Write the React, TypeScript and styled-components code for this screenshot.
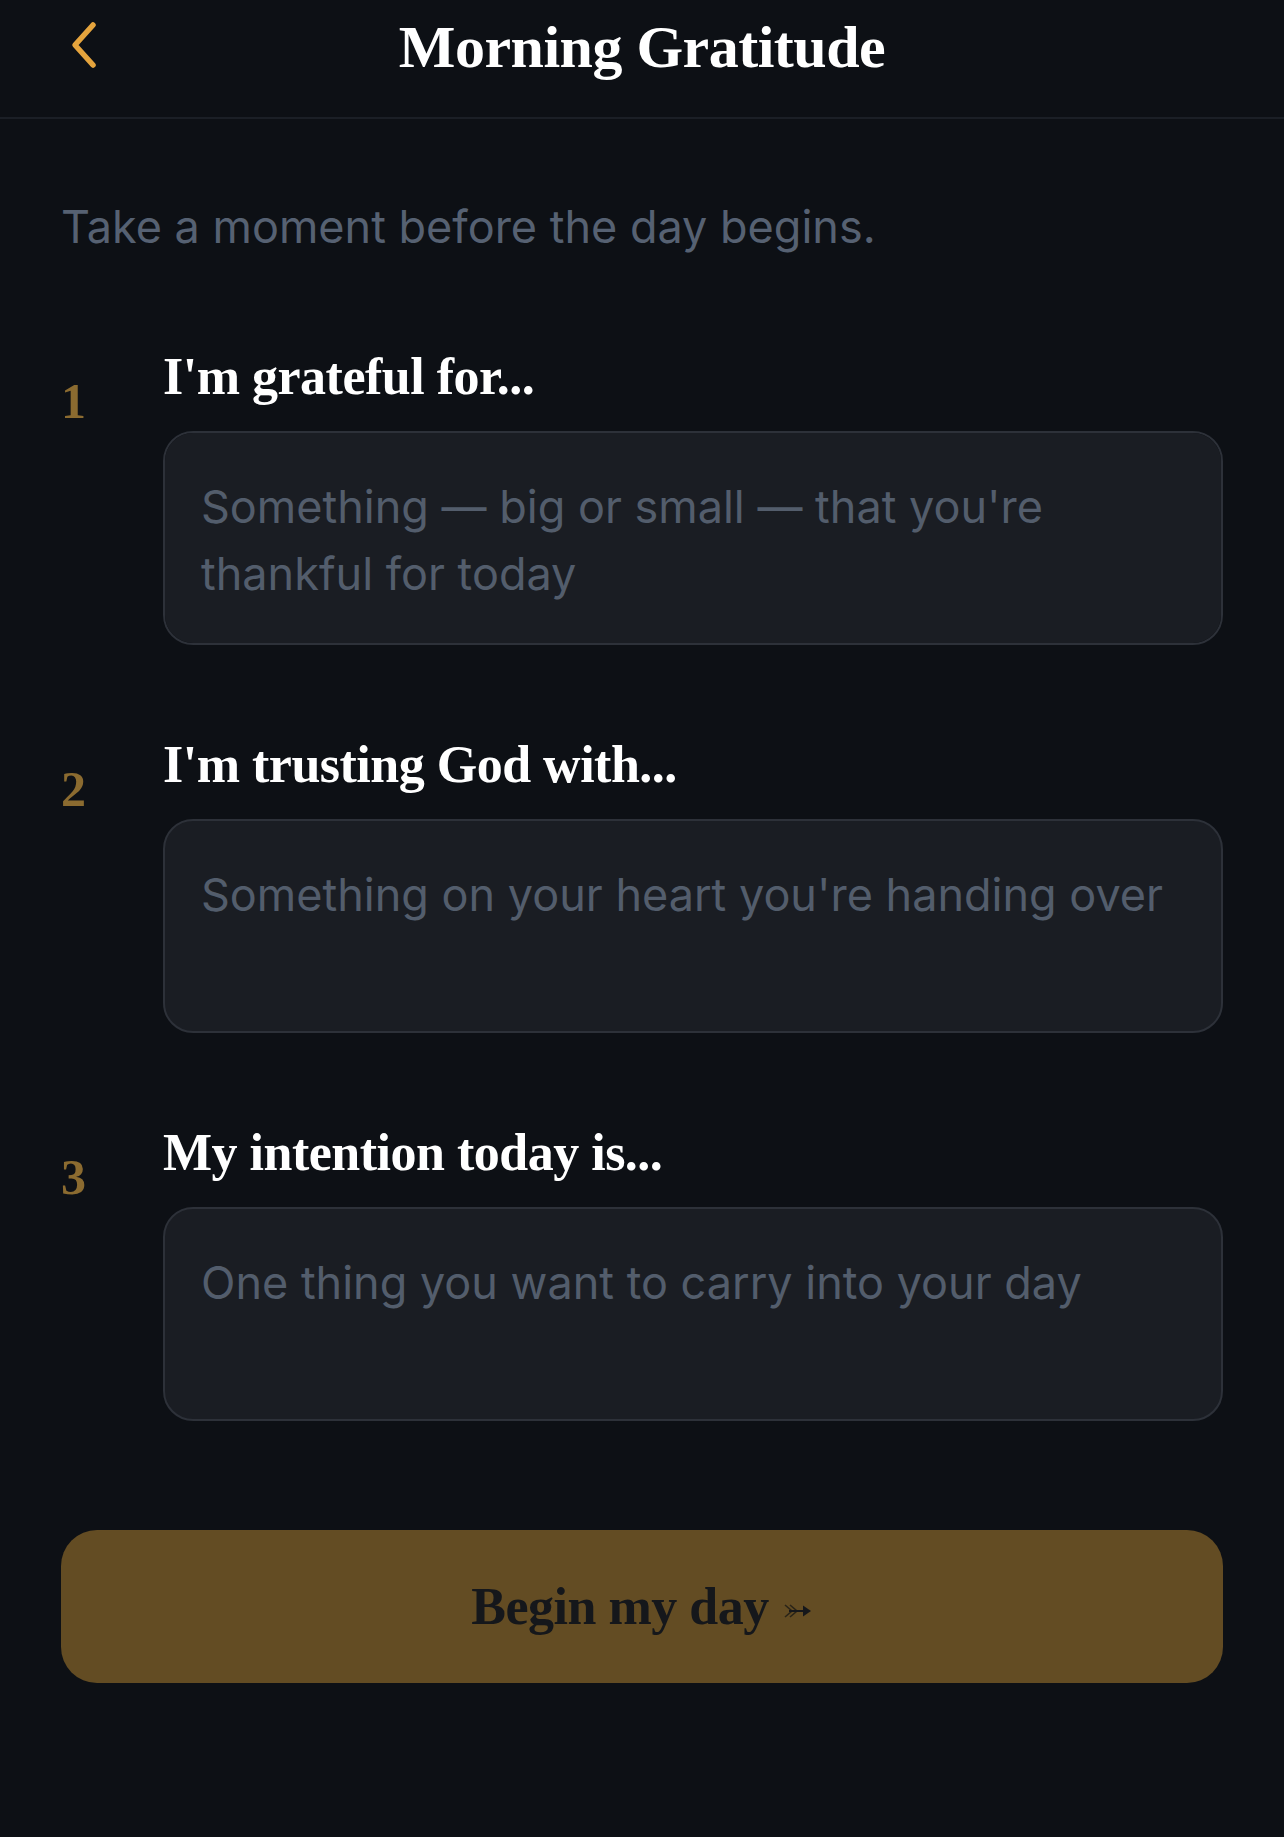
import * as React from "react";
import styled, { createGlobalStyle } from "styled-components";

const GlobalStyle = createGlobalStyle`
  html, body {
    margin: 0;
    padding: 0;
    background: #0d1015;
  }
  body {
    font-family: Inter, "Liberation Sans", sans-serif;
    -webkit-font-smoothing: antialiased;
  }
`;

const serif = `"Liberation Serif", "DejaVu Serif", serif`;

const Screen = styled.div`
  min-height: 1837px;
  background: #0d1015;
  color: #fff;
`;

const Header = styled.header`
  display: grid;
  grid-template-columns: 1fr auto 1fr;
  align-items: start;
  height: 119px;
  padding: 13px 68px 0;
  box-sizing: border-box;
  border-bottom: 2px solid #1b1f26;
`;

const BackButton = styled.button`
  justify-self: start;
  display: flex;
  align-items: center;
  background: none;
  border: 0;
  padding: 7px 0 0;
  cursor: pointer;
`;

const Title = styled.h1`
  margin: 0;
  font-family: ${serif};
  font-weight: 700;
  font-size: 60px;
  line-height: 68px;
  letter-spacing: -0.5px;
  color: #ffffff;
`;

const Content = styled.main`
  padding: 82px 61px 0;
`;

const Intro = styled.p`
  margin: 0 0 94px;
  font-size: 45px;
  line-height: 52px;
  color: #566172;
`;

const List = styled.div`
  display: flex;
  flex-direction: column;
  gap: 90px;
`;

const Item = styled.section`
  display: grid;
  grid-template-columns: 102px 1fr;
`;

const Num = styled.span`
  font-family: ${serif};
  font-weight: 700;
  font-size: 50px;
  line-height: 48px;
  margin-top: 30px;
  color: #8b6b30;
`;

const Body = styled.div`
  display: flex;
  flex-direction: column;
  gap: 24px;
`;

const Label = styled.label`
  font-family: ${serif};
  font-weight: 700;
  font-size: 52px;
  line-height: 60px;
  letter-spacing: -0.5px;
  color: #ffffff;
`;

const Field = styled.textarea`
  display: block;
  width: 100%;
  height: 214px;
  box-sizing: border-box;
  padding: 40px 36px 40px;
  resize: none;
  border: 2px solid #2d3139;
  border-radius: 30px;
  background: #1a1d23;
  color: #e6e8ec;
  font-family: Inter, "Liberation Sans", sans-serif;
  font-size: 45px;
  line-height: 67px;
  outline: none;
  &::placeholder {
    color: #535d6c;
  }
`;

const BeginButton = styled.button`
  display: flex;
  align-items: center;
  justify-content: center;
  gap: 14px;
  width: 100%;
  height: 153px;
  margin-top: 109px;
  border: 0;
  border-radius: 36px;
  background: #634c23;
  color: #15171b;
  font-family: ${serif};
  font-weight: 700;
  font-size: 52px;
  letter-spacing: -0.5px;
  cursor: pointer;
`;

const ArrowIcon = styled.svg`
  margin-top: 8px;
`;

const ChevronLeft = () => (
  <svg width="30" height="50" viewBox="0 0 30 50" fill="none">
    <path
      d="M25 5 L7 25 L25 45"
      stroke="#e5a43d"
      strokeWidth="5.5"
      strokeLinecap="round"
      strokeLinejoin="round"
    />
  </svg>
);

const FeatherArrow = () => (
  <ArrowIcon width="30" height="18" viewBox="0 0 30 18" fill="none">
    <path d="M2 3 L9 9 L2 15 M7 3 L14 9 L7 15" stroke="#2a2418" strokeWidth="1.6" />
    <path d="M6 9 H22" stroke="#15171b" strokeWidth="2" />
    <path d="M20 3.5 L28 9 L20 14.5 Z" fill="#15171b" />
  </ArrowIcon>
);

const prompts = [
  {
    label: "I'm grateful for...",
    placeholder: "Something — big or small — that you're thankful for today",
  },
  {
    label: "I'm trusting God with...",
    placeholder: "Something on your heart you're handing over",
  },
  {
    label: "My intention today is...",
    placeholder: "One thing you want to carry into your day",
  },
];

export default function App() {
  return (
    <Screen>
      <GlobalStyle />
      <Header>
        <BackButton aria-label="Back">
          <ChevronLeft />
        </BackButton>
        <Title>Morning Gratitude</Title>
        <span />
      </Header>
      <Content>
        <Intro>Take a moment before the day begins.</Intro>
        <List>
          {prompts.map((p, i) => (
            <Item key={p.label}>
              <Num>{i + 1}</Num>
              <Body>
                <Label>{p.label}</Label>
                <Field placeholder={p.placeholder} />
              </Body>
            </Item>
          ))}
        </List>
        <BeginButton>
          Begin my day
          <FeatherArrow />
        </BeginButton>
      </Content>
    </Screen>
  );
}
